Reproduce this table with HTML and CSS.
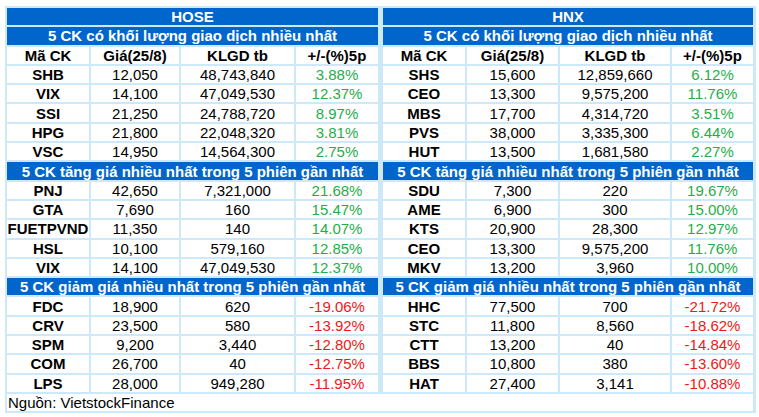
FILE: index.html
```html
<!DOCTYPE html>
<html lang="vi">
<head>
<meta charset="utf-8">
<title>Top CK</title>
<link rel="stylesheet" href="styles.css">
</head>
<body>
<div class="board">
  <div class="grid left">
    <div class="title span4">HOSE</div>
    <div class="sub span4">5 CK có khối lượng giao dịch nhiều nhất</div>
    <div class="hd">Mã CK</div><div class="hd">Giá(25/8)</div><div class="hd">KLGD tb</div><div class="hd">+/-(%)5p</div>
    <div class="c b">SHB</div><div class="c">12,050</div><div class="c">48,743,840</div><div class="c up">3.88%</div>
    <div class="c b">VIX</div><div class="c">14,100</div><div class="c">47,049,530</div><div class="c up">12.37%</div>
    <div class="c b">SSI</div><div class="c">21,250</div><div class="c">24,788,720</div><div class="c up">8.97%</div>
    <div class="c b">HPG</div><div class="c">21,800</div><div class="c">22,048,320</div><div class="c up">3.81%</div>
    <div class="c b">VSC</div><div class="c">14,950</div><div class="c">14,564,300</div><div class="c up">2.75%</div>
    <div class="sub span4">5 CK tăng giá nhiều nhất trong 5 phiên gần nhất</div>
    <div class="c b">PNJ</div><div class="c">42,650</div><div class="c">7,321,000</div><div class="c up">21.68%</div>
    <div class="c b">GTA</div><div class="c">7,690</div><div class="c">160</div><div class="c up">15.47%</div>
    <div class="c b">FUETPVND</div><div class="c">11,350</div><div class="c">140</div><div class="c up">14.07%</div>
    <div class="c b">HSL</div><div class="c">10,100</div><div class="c">579,160</div><div class="c up">12.85%</div>
    <div class="c b">VIX</div><div class="c">14,100</div><div class="c">47,049,530</div><div class="c up">12.37%</div>
    <div class="sub span4">5 CK giảm giá nhiều nhất trong 5 phiên gần nhất</div>
    <div class="c b">FDC</div><div class="c">18,900</div><div class="c">620</div><div class="c down">-19.06%</div>
    <div class="c b">CRV</div><div class="c">23,500</div><div class="c">580</div><div class="c down">-13.92%</div>
    <div class="c b">SPM</div><div class="c">9,200</div><div class="c">3,440</div><div class="c down">-12.80%</div>
    <div class="c b">COM</div><div class="c">26,700</div><div class="c">40</div><div class="c down">-12.75%</div>
    <div class="c b">LPS</div><div class="c">28,000</div><div class="c">949,280</div><div class="c down">-11.95%</div>
  </div>
  <div class="grid right">
    <div class="title span4">HNX</div>
    <div class="sub span4">5 CK có khối lượng giao dịch nhiều nhất</div>
    <div class="hd">Mã CK</div><div class="hd">Giá(25/8)</div><div class="hd">KLGD tb</div><div class="hd">+/-(%)5p</div>
    <div class="c b">SHS</div><div class="c">15,600</div><div class="c">12,859,660</div><div class="c up">6.12%</div>
    <div class="c b">CEO</div><div class="c">13,300</div><div class="c">9,575,200</div><div class="c up">11.76%</div>
    <div class="c b">MBS</div><div class="c">17,700</div><div class="c">4,314,720</div><div class="c up">3.51%</div>
    <div class="c b">PVS</div><div class="c">38,000</div><div class="c">3,335,300</div><div class="c up">6.44%</div>
    <div class="c b">HUT</div><div class="c">13,500</div><div class="c">1,681,580</div><div class="c up">2.27%</div>
    <div class="sub span4">5 CK tăng giá nhiều nhất trong 5 phiên gần nhất</div>
    <div class="c b">SDU</div><div class="c">7,300</div><div class="c">220</div><div class="c up">19.67%</div>
    <div class="c b">AME</div><div class="c">6,900</div><div class="c">300</div><div class="c up">15.00%</div>
    <div class="c b">KTS</div><div class="c">20,900</div><div class="c">28,300</div><div class="c up">12.97%</div>
    <div class="c b">CEO</div><div class="c">13,300</div><div class="c">9,575,200</div><div class="c up">11.76%</div>
    <div class="c b">MKV</div><div class="c">13,200</div><div class="c">3,960</div><div class="c up">10.00%</div>
    <div class="sub span4">5 CK giảm giá nhiều nhất trong 5 phiên gần nhất</div>
    <div class="c b">HHC</div><div class="c">77,500</div><div class="c">700</div><div class="c down">-21.72%</div>
    <div class="c b">STC</div><div class="c">11,800</div><div class="c">8,560</div><div class="c down">-18.62%</div>
    <div class="c b">CTT</div><div class="c">13,200</div><div class="c">40</div><div class="c down">-14.84%</div>
    <div class="c b">BBS</div><div class="c">10,800</div><div class="c">380</div><div class="c down">-13.60%</div>
    <div class="c b">HAT</div><div class="c">27,400</div><div class="c">3,141</div><div class="c down">-10.88%</div>
  </div>
  <div class="source">Nguồn: VietstockFinance</div>
</div>
</body>
</html>
```
FILE: styles.css
```css
html, body {
  margin: 0;
  padding: 0;
  background: #ffffff;
}
body {
  font-family: "Liberation Sans", Arial, sans-serif;
  font-size: 15px;
  color: #000;
}
.board {
  margin: 6px 0 0 5px;
  width: 746px;
  padding: 2px 3px 2px 2px;
  background: #cde8f9;
  display: grid;
  grid-template-columns: 371px 370px;
  column-gap: 5px;
  row-gap: 2px;
}
.grid {
  display: grid;
  gap: 2px;
  grid-auto-rows: 17.3px;
}
.left {
  grid-template-columns: 82px 88px 113px 82px;
}
.right {
  grid-template-columns: 82px 91px 110px 81px;
}
.span4 {
  grid-column: 1 / span 4;
}
.title, .sub {
  background: #0066cc;
  color: #ffffff;
  font-weight: bold;
  display: flex;
  align-items: center;
  justify-content: center;
  white-space: nowrap;
}
.hd, .c {
  background: #ffffff;
  display: flex;
  align-items: center;
  justify-content: center;
  white-space: nowrap;
}
.hd, .b {
  font-weight: bold;
}
.up {
  color: #1fae4c;
}
.down {
  color: #f01818;
}
.source {
  grid-column: 1 / span 2;
  background: #ffffff;
  height: 17.3px;
  display: flex;
  align-items: center;
  padding-left: 1px;
  white-space: nowrap;
}
```
